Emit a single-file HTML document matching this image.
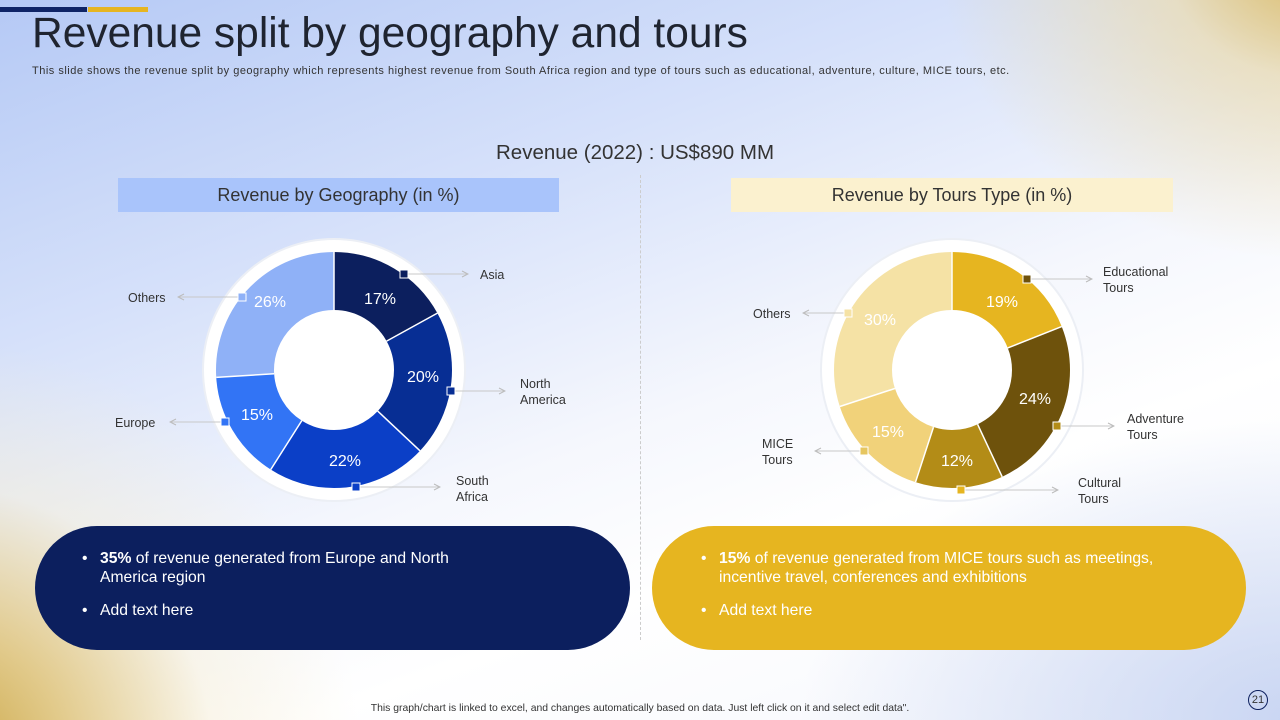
<!DOCTYPE html>
<html><head><meta charset="utf-8"><style>
*{margin:0;padding:0;box-sizing:border-box}
body{width:1280px;height:720px;overflow:hidden;font-family:"Liberation Sans",sans-serif;position:relative;
background:
radial-gradient(ellipse 420px 420px at -60px 760px,#c9a440 0%,rgba(220,190,110,.8) 30%,rgba(245,235,205,.4) 65%,rgba(255,255,255,0) 100%),
radial-gradient(ellipse 380px 300px at 1320px -40px,#d9b860 0%,rgba(235,215,160,.6) 40%,rgba(255,255,255,0) 100%),
radial-gradient(ellipse 500px 300px at 1300px 720px,rgba(190,205,240,.8) 0%,rgba(255,255,255,0) 100%),
linear-gradient(160deg,#b5c9f5 0%,#d6e1fa 30%,#f5f7fd 55%,#ffffff 70%,#f4f6fc 100%);}
.a{position:absolute}
.t{color:#333;font-size:12.5px;line-height:16px}
.p{color:#fff;font-size:15.7px}
</style></head><body>
<div class="a" style="left:0;top:7px;width:87px;height:5px;background:#0f2466"></div>
<div class="a" style="left:88px;top:7px;width:60px;height:5px;background:#e6b520"></div>
<div class="a" style="left:32px;top:10px;font-size:42.5px;color:#1f2430">Revenue split by geography and tours</div>
<div class="a" style="left:32px;top:65px;font-size:11px;color:#333;letter-spacing:0.5px;white-space:nowrap">This slide shows the revenue split by geography which represents highest revenue from South Africa region and type of tours such as educational, adventure, culture, MICE tours, etc.</div>
<div class="a" style="left:0;width:1270px;top:141px;text-align:center;font-size:20.5px;color:#333">Revenue (2022) : US$890 MM</div>
<div class="a" style="left:640px;top:175px;height:465px;border-left:1px dashed #ccc"></div>
<div class="a" style="left:118px;top:178px;width:441px;height:34px;background:#a9c4fb;text-align:center;line-height:34px;font-size:18px;color:#333">Revenue by Geography (in %)</div>
<div class="a" style="left:731px;top:178px;width:442px;height:34px;background:#fbf1cf;text-align:center;line-height:34px;font-size:18px;color:#333">Revenue by Tours Type (in %)</div>

<svg class="a" style="left:0;top:0" width="1280" height="720">
<defs><marker id="ar" markerWidth="8" markerHeight="8" refX="7" refY="4" orient="auto"><path d="M1 1L7 4L1 7" fill="none" stroke="#bbb" stroke-width="1"/></marker></defs>
<circle cx="334" cy="370" r="131" fill="#fff" stroke="#eceff5" stroke-width="2"/>
<g transform="rotate(-90 334 370)" fill="none" stroke-width="58">
<circle cx="334" cy="370" r="89" stroke="#0c1f5e" stroke-dasharray="95.06 600" stroke-dashoffset="0"/>
<circle cx="334" cy="370" r="89" stroke="#072e94" stroke-dasharray="111.84 600" stroke-dashoffset="-95.06"/>
<circle cx="334" cy="370" r="89" stroke="#0b3fc7" stroke-dasharray="123.02 600" stroke-dashoffset="-206.9"/>
<circle cx="334" cy="370" r="89" stroke="#3274f5" stroke-dasharray="83.88 600" stroke-dashoffset="-329.92"/>
<circle cx="334" cy="370" r="89" stroke="#8fb1f7" stroke-dasharray="145.39 600" stroke-dashoffset="-413.8"/>
</g>
<circle cx="952" cy="370" r="131" fill="#fff" stroke="#eceff5" stroke-width="2"/>
<g transform="rotate(-90 952 370)" fill="none" stroke-width="58">
<circle cx="952" cy="370" r="89" stroke="#e6b520" stroke-dasharray="106.25 600" stroke-dashoffset="0"/>
<circle cx="952" cy="370" r="89" stroke="#6e520c" stroke-dasharray="134.21 600" stroke-dashoffset="-106.25"/>
<circle cx="952" cy="370" r="89" stroke="#b38c17" stroke-dasharray="67.1 600" stroke-dashoffset="-240.46"/>
<circle cx="952" cy="370" r="89" stroke="#f1d27a" stroke-dasharray="83.88 600" stroke-dashoffset="-307.56"/>
<circle cx="952" cy="370" r="89" stroke="#f5e2a5" stroke-dasharray="167.76 600" stroke-dashoffset="-391.44"/>
</g>
<g stroke="#fff" stroke-width="1.5">
<line x1="334" y1="311" x2="334" y2="251"/><line x1="386.6" y1="341.1" x2="437.4" y2="313.1"/><line x1="377.7" y1="411.1" x2="420" y2="450.8"/><line x1="301.8" y1="420.6" x2="270.7" y2="469.6"/><line x1="274.1" y1="373.8" x2="216.2" y2="377.4"/>
<line x1="952" y1="311" x2="952" y2="251"/><line x1="1007.8" y1="347.9" x2="1061.7" y2="326.6"/><line x1="977.6" y1="424.3" x2="1002.2" y2="476.8"/><line x1="933.5" y1="427.1" x2="915.5" y2="482.2"/><line x1="894.9" y1="388.5" x2="839.8" y2="406.5"/>
</g>
<g stroke="#c8c8c8" stroke-width="1" marker-end="url(#ar)">
<line x1="404" y1="274" x2="468" y2="274"/><line x1="451" y1="391" x2="505" y2="391"/><line x1="356" y1="487" x2="440" y2="487"/><line x1="225" y1="422" x2="170" y2="422"/><line x1="242" y1="297" x2="178" y2="297"/>
<line x1="1027" y1="279" x2="1092" y2="279"/><line x1="1057" y1="426" x2="1114" y2="426"/><line x1="961" y1="490" x2="1058" y2="490"/><line x1="864" y1="451" x2="815" y2="451"/><line x1="848" y1="313" x2="803" y2="313"/>
</g>
<g stroke="#fff" stroke-width="1">
<rect x="400" y="270" width="8" height="8" fill="#0c1f5e"/><rect x="447" y="387" width="8" height="8" fill="#072e94"/><rect x="352" y="483" width="8" height="8" fill="#0b3fc7"/><rect x="221" y="418" width="8" height="8" fill="#3274f5"/><rect x="238" y="293" width="8" height="8" fill="#8fb1f7"/>
<rect x="1023" y="275" width="8" height="8" fill="#6e520c"/><rect x="1053" y="422" width="8" height="8" fill="#b38c17"/><rect x="957" y="486" width="8" height="8" fill="#e6b520"/><rect x="860" y="447" width="8" height="8" fill="#e6c660"/><rect x="844" y="309" width="8" height="8" fill="#f5e2a5"/>
</g>
<g font-family="Liberation Sans" font-size="16" fill="#fff" text-anchor="middle">
<text x="380" y="304">17%</text><text x="423" y="382">20%</text><text x="345" y="466">22%</text><text x="257" y="420">15%</text><text x="270" y="307">26%</text>
<text x="1002" y="307">19%</text><text x="1035" y="404">24%</text><text x="957" y="466">12%</text><text x="888" y="437">15%</text><text x="880" y="325">30%</text>
</g>
</svg>
<div class="a t" style="left:480px;top:267px">Asia</div>
<div class="a t" style="left:520px;top:376px">North<br>America</div>
<div class="a t" style="left:456px;top:473px">South<br>Africa</div>
<div class="a t" style="left:115px;top:415px">Europe</div>
<div class="a t" style="left:128px;top:290px">Others</div>
<div class="a t" style="left:1103px;top:264px">Educational<br>Tours</div>
<div class="a t" style="left:1127px;top:411px">Adventure<br>Tours</div>
<div class="a t" style="left:1078px;top:475px">Cultural<br>Tours</div>
<div class="a t" style="left:762px;top:436px">MICE<br>Tours</div>
<div class="a t" style="left:753px;top:306px">Others</div>

<div class="a" style="left:35px;top:526px;width:595px;height:124px;border-radius:62px;background:#0c1f5e"></div>
<div class="a" style="left:652px;top:526px;width:594px;height:124px;border-radius:62px;background:#e6b520"></div>
<div class="a p" style="left:82px;top:549px;line-height:19px">•</div>
<div class="a p" style="left:100px;top:549px;line-height:19px;width:380px"><b>35%</b> of revenue generated from Europe and North America region</div>
<div class="a p" style="left:82px;top:602px">•</div><div class="a p" style="left:100px;top:602px">Add text here</div>
<div class="a p" style="left:701px;top:549px;line-height:19px">•</div>
<div class="a p" style="left:719px;top:549px;line-height:19px;width:460px"><b>15%</b> of revenue generated from MICE tours such as meetings, incentive travel, conferences and exhibitions</div>
<div class="a p" style="left:701px;top:602px">•</div><div class="a p" style="left:719px;top:602px">Add text here</div>

<div class="a" style="left:0;width:1280px;top:703px;text-align:center;font-size:10.4px;color:#333">This graph/chart is linked to excel, and changes automatically based on data. Just left click on it and select edit data".</div>
<div class="a" style="left:1248px;top:690px;width:20px;height:20px;border:1px solid #0c1f5e;border-radius:50%;font-size:11px;color:#333;text-align:center;line-height:18px">21</div>
</body></html>
